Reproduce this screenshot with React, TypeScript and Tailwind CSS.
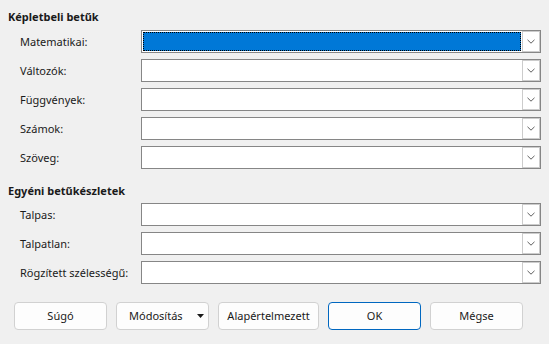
import React from "react";

const ChevronDown = () => (
  <svg width="8" height="5" viewBox="0 0 8 5" fill="none">
    <path d="M0.5 0.8 L4 4.2 L7.5 0.8" stroke="#5f5f5f" strokeWidth="1" />
  </svg>
);

const Combo = ({ selected = false }: { selected?: boolean }) => (
  <div className="flex h-[23px] w-[400px] shrink-0 border border-[#868686] bg-white">
    <div className="flex-1 p-px">
      {selected && (
        <div className="h-full w-full bg-[#0078d7] outline-1 outline-dotted outline-black -outline-offset-1" />
      )}
    </div>
    <div className="flex w-[18px] items-center justify-center border border-[#cccccc] bg-white">
      <ChevronDown />
    </div>
  </div>
);

const Row = ({ label, selected }: { label: string; selected?: boolean }) => (
  <div className="flex items-center">
    <span className="w-[133px] shrink-0 whitespace-nowrap pl-[12px]">{label}</span>
    <Combo selected={selected} />
  </div>
);

const Button = ({
  children,
  width = "w-[93px]",
  primary = false,
  className = "justify-center",
}: {
  children: React.ReactNode;
  width?: string;
  primary?: boolean;
  className?: string;
}) => (
  <button
    className={`${width} flex h-[28px] items-center rounded-[4px] border bg-[#fdfdfd] ${
      primary ? "border-[#0067c0]" : "border-[#d1d1d1]"
    } ${className}`}
  >
    {children}
  </button>
);

export default function App() {
  const formulaFonts = ["Változók:", "Függvények:", "Számok:", "Szöveg:"];
  const customFonts = ["Talpas:", "Talpatlan:", "Rögzített szélességű:"];

  return (
    <div
      className="h-[344px] w-[549px] bg-[#f0f0f0] text-[11px] leading-[16px] text-[#1a1a1a]"
      style={{ fontFamily: '"Noto Sans", "Open Sans", sans-serif' }}
    >
      <div className="pl-[8px] pt-[9px]">
        <div className="font-bold">Képletbeli betűk</div>
        <div className="mt-[5px] flex flex-col gap-[6px]">
          <Row label="Matematikai:" selected />
          {formulaFonts.map((l) => (
            <Row key={l} label={l} />
          ))}
        </div>

        <div className="mt-[14px] font-bold">Egyéni betűkészletek</div>
        <div className="mt-[4px] flex flex-col gap-[6px]">
          {customFonts.map((l) => (
            <Row key={l} label={l} />
          ))}
        </div>
      </div>

      <div className="mt-[18px] flex gap-[9px] pl-[14px]">
        <Button>Súgó</Button>
        <Button className="justify-between pl-[12px] pr-[4px]">
          <span>Módosítás</span>
          <svg width="7" height="4" viewBox="0 0 7 4">
            <path d="M0 0 L7 0 L3.5 4 Z" fill="#1a1a1a" />
          </svg>
        </Button>
        <Button width="w-[101px]">Alapértelmezett</Button>
        <Button primary>OK</Button>
        <Button>Mégse</Button>
      </div>
    </div>
  );
}
